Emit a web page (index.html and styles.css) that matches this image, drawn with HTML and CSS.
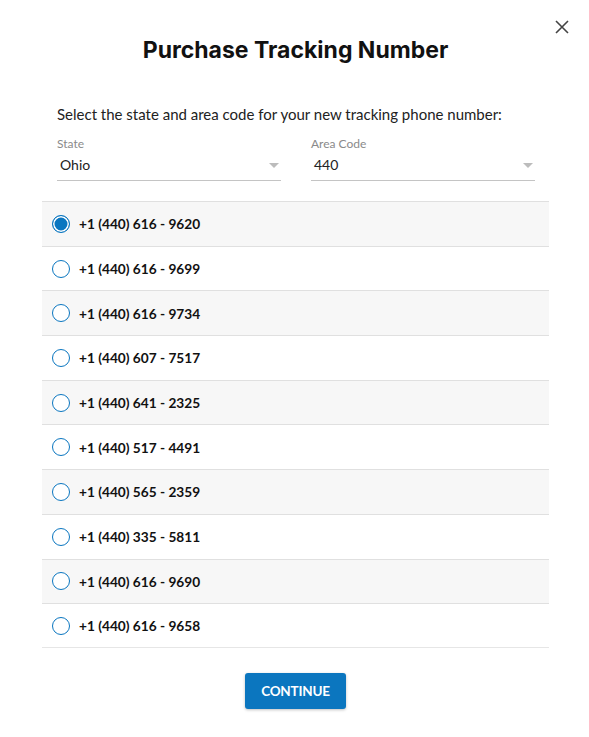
FILE: index.html
```html
<!DOCTYPE html>
<html>
<head>
<meta charset="utf-8">
<link rel="stylesheet" href="styles.css">
</head>
<body>
<div class="modal">
  <button class="close" aria-label="Close">
    <svg width="16" height="16" viewBox="0 0 16 16"><path d="M2 2L14 14M14 2L2 14" stroke="#444" stroke-width="1.6" fill="none"/></svg>
  </button>
  <h1 class="title">Purchase Tracking Number</h1>
  <div class="form">
    <p class="intro">Select the state and area code for your new tracking phone number:</p>
    <div class="fields">
      <div class="field">
        <span class="label">State</span>
        <div class="select"><span>Ohio</span><i class="caret"></i></div>
      </div>
      <div class="field">
        <span class="label">Area Code</span>
        <div class="select"><span>440</span><i class="caret"></i></div>
      </div>
    </div>
  </div>
  <ul class="list">
    <li class="row"><span class="radio checked"></span>+1 (440) 616 - 9620</li>
    <li class="row"><span class="radio"></span>+1 (440) 616 - 9699</li>
    <li class="row"><span class="radio"></span>+1 (440) 616 - 9734</li>
    <li class="row"><span class="radio"></span>+1 (440) 607 - 7517</li>
    <li class="row"><span class="radio"></span>+1 (440) 641 - 2325</li>
    <li class="row"><span class="radio"></span>+1 (440) 517 - 4491</li>
    <li class="row"><span class="radio"></span>+1 (440) 565 - 2359</li>
    <li class="row"><span class="radio"></span>+1 (440) 335 - 5811</li>
    <li class="row"><span class="radio"></span>+1 (440) 616 - 9690</li>
    <li class="row"><span class="radio"></span>+1 (440) 616 - 9658</li>
  </ul>
  <div class="actions">
    <button class="continue">CONTINUE</button>
  </div>
</div>
</body>
</html>
```
FILE: styles.css
```css
* { box-sizing: border-box; }
html, body { margin: 0; padding: 0; background: #fff; }
body {
  font-family: "Lato", "Noto Sans", "Liberation Sans", sans-serif;
  color: #111;
  width: 589px;
  height: 737px;
  overflow: hidden;
}
.modal {
  position: relative;
  padding: 35px 40px 0 42px;
}
.close {
  position: absolute;
  top: 19px;
  right: 19px;
  width: 16px;
  height: 16px;
  padding: 0;
  border: 0;
  background: none;
  display: flex;
}
.title {
  margin: 0;
  text-align: center;
  font-family: "Inter", "Lato", sans-serif;
  font-size: 23px;
  font-weight: 700;
  line-height: 30px;
  letter-spacing: 0;
  color: #111;
}
.form {
  padding: 0 14px 0 15px;
}
.intro {
  margin: 39px 0 0;
  font-size: 15px;
  line-height: 20px;
  color: #222;
}
.fields {
  display: grid;
  grid-template-columns: 224px 224px;
  justify-content: space-between;
  margin-top: 13px;
}
.field { display: flex; flex-direction: column; }
.label {
  font-size: 12px;
  line-height: 14px;
  color: #8a8a8a;
}
.select {
  display: flex;
  align-items: center;
  justify-content: space-between;
  height: 30px;
  padding: 0 2px 0 3px;
  border-bottom: 1px solid #c4c4c4;
  font-size: 14px;
  color: #222;
}
.select span { margin-top: -2px; }
.caret {
  width: 0; height: 0;
  border-left: 5px solid transparent;
  border-right: 5px solid transparent;
  border-top: 5px solid #bcbcbc;
}
.list {
  list-style: none;
  margin: 20px 0 0;
  padding: 0;
}
.row {
  display: flex;
  align-items: center;
  gap: 9px;
  height: 44.7px;
  padding-left: 10px;
  border-top: 1px solid #e0e0e0;
  font-size: 13.7px;
  font-weight: 700;
  color: #111;
}
.row:nth-child(odd) { background: #f7f7f7; }
.row:last-child { border-bottom: 1px solid #e6e6e6; }
.radio {
  width: 18px;
  height: 18px;
  border-radius: 50%;
  border: 1.5px solid #0a76c0;
  background: #fff;
  flex: none;
}
.radio.checked {
  background: #0a76c0;
  box-shadow: inset 0 0 0 1.5px #fff;
}
.actions {
  display: flex;
  justify-content: center;
  margin-top: 25px;
}
.continue {
  width: 101px;
  height: 36px;
  border: 0;
  border-radius: 3px;
  background: #0b76bf;
  color: #fff;
  font-family: inherit;
  font-weight: 700;
  font-size: 13.5px;
  letter-spacing: -0.2px;
  box-shadow: 0 1px 3px rgba(0,0,0,0.25);
}
```
